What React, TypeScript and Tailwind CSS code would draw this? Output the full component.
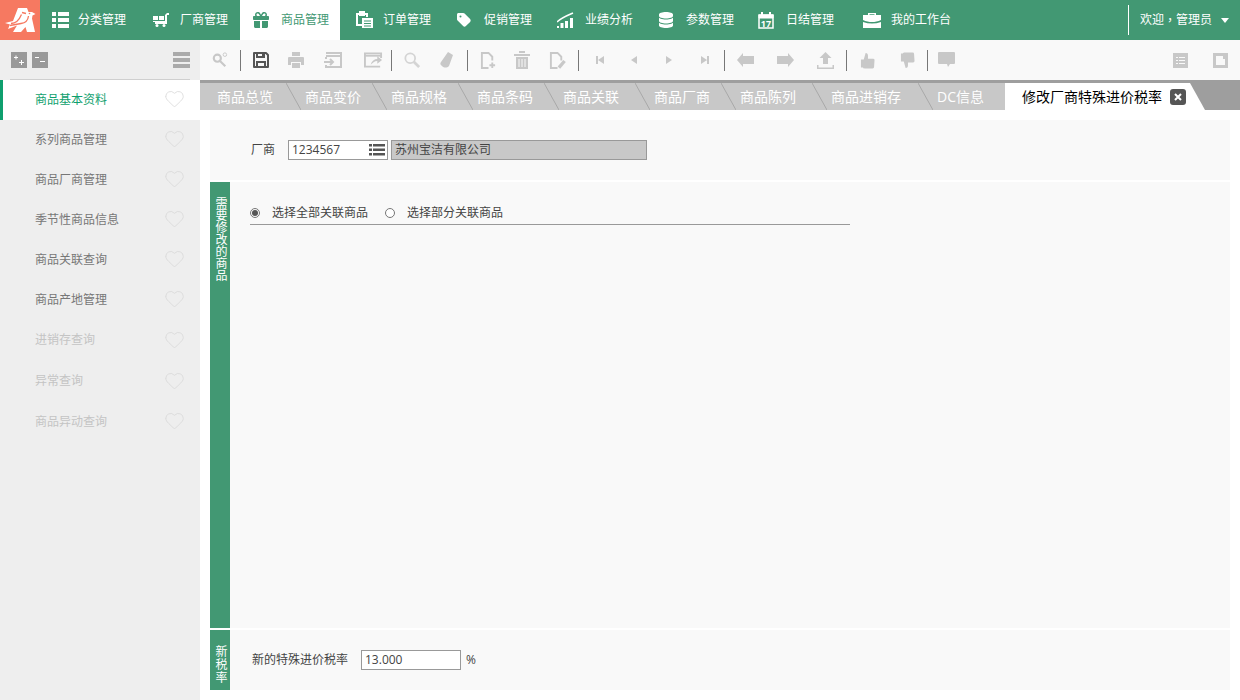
import type { ReactNode } from "react"
import { Heart } from "lucide-react"
import { FaGift, FaTag, FaDatabase } from "react-icons/fa6"

const font = "font-['Open_Sans','Noto_Sans_CJK_SC',sans-serif]"

function Logo() {
  return (
    <svg viewBox="0 0 40 40" className="w-10 h-10 shrink-0">
      <rect width="40" height="40" fill="#f67961" />
      <path fill="#fff" d="M18 8h9l1.500 4 3.500 0 3.500 2-3 1.500-.5 3L35 32h-8l-1.500-5-4.500 5h-8l4-6.500L8 29l2-4.500-5-1.500 8-2z" />
      <path fill="none" stroke="#f67961" strokeWidth="1.300" d="M11 23.500c5 0 8-3 10.500-9M10 25.500l11-2c4-.5 7-3 7.500-7.500M22 12.500l4 1" />
      <circle cx="29.500" cy="13.500" r=".8" fill="#f67961" />
    </svg>
  )
}

function MenuIcon({ name, active }: { name: string; active?: boolean }) {
  const color = active ? "#429873" : "#fff"
  switch (name) {
    case "list":
      return (
        <svg viewBox="0 0 17 16" className="w-[17px] h-4" fill={color}>
          <path d="M0 0h4v4H0zM6 0h11v4H6zM0 6h4v4H0zM6 6h11v4H6zM0 12h4v4H0zM6 12h11v4H6z" />
        </svg>
      )
    case "cart":
      return (
        <svg viewBox="0 0 16 14" className="w-4 h-[14px]" fill={color}>
          <path d="M0 3h5v4H0zM6 3h5v4H6zM0 8h12V2l2-2h2v2h-2v9H2V9H0z" />
          <circle cx="4" cy="12.500" r="1.500" />
          <circle cx="11" cy="12.500" r="1.500" />
        </svg>
      )
    case "gift":
      return <FaGift color={color} size={16} />
    case "order":
      return (
        <svg viewBox="0 0 18 18" className="w-[18px] h-[18px]" fill="none" stroke={color} strokeWidth="2">
          <path d="M6 14H1V3h10v3" />
          <path d="M4 1h4v3H4z" fill={color} />
          <path d="M6 7h11v10H6z" fill={color} stroke="none" />
          <path d="M8 10h7M8 12.500h7M8 15h7" stroke="#429873" strokeWidth="1" />
        </svg>
      )
    case "tag":
      return <FaTag color={color} size={16} />
    case "chart":
      return (
        <svg viewBox="0 0 17 16" className="w-[17px] h-4" fill={color}>
          <path d="M0 14h2v2H0zM3.500 11h3v5h-3zM8 9h3v7H8zM13 6h3v10h-3z" />
          <path d="M0 10C4 6 9 4 16 1" fill="none" stroke={color} strokeWidth="1.500" />
        </svg>
      )
    case "db":
      return <FaDatabase color={color} size={16} />
    case "cal":
      return (
        <svg viewBox="0 0 16 17" className="w-4 h-[17px]" fill="none" stroke={color}>
          <path d="M1 3h14v13H1z" strokeWidth="1.500" />
          <path d="M1 3h14v3H1z" fill={color} />
          <path d="M4 0v3M12 0v3" strokeWidth="2" />
          <text x="8" y="14.500" textAnchor="middle" fontSize="9" fontWeight="700" fill={color} stroke="none">17</text>
        </svg>
      )
    default:
      return (
        <svg viewBox="0 0 18 16" className="w-[18px] h-4" fill={color}>
          <path d="M5 3V1h8v2h-1.500V2.300h-5V3z" />
          <path d="M0 3h18v5c-3 1.500-6 2-9 2s-6-.5-9-2z" />
          <path d="M0 10c3 1 6 1.500 9 1.500s6-.5 9-1.500v6H0z" />
        </svg>
      )
  }
}

const menus = [
  { icon: "list", label: "分类管理", w: "w-[100px]", pl: "pl-[12px]", box: "w-[26px]" },
  { icon: "cart", label: "厂商管理", w: "w-[100px]", pl: "pl-[13px]", box: "w-[27px]" },
  { icon: "gift", label: "商品管理", w: "w-[100px]", pl: "pl-[13px]", box: "w-[28px]", active: true },
  { icon: "order", label: "订单管理", w: "w-[102px]", pl: "pl-[16px]", box: "w-[27px]" },
  { icon: "tag", label: "促销管理", w: "w-[101px]", pl: "pl-[14px]", box: "w-[28px]" },
  { icon: "chart", label: "业绩分析", w: "w-[101px]", pl: "pl-[14px]", box: "w-[28px]" },
  { icon: "db", label: "参数管理", w: "w-[101px]", pl: "pl-[14px]", box: "w-[28px]" },
  { icon: "cal", label: "日结管理", w: "w-[105px]", pl: "pl-[13px]", box: "w-[28px]" },
  { icon: "bag", label: "我的工作台", w: "w-[120px]", pl: "pl-[13px]", box: "w-[28px]" },
]

const sideItems = [
  { label: "商品基本资料", cls: "h-10 bg-white text-[#0f9f6e] border-l-[3px] border-[#0f9f6e] pl-[32px]", heart: "-mt-[3px]" },
  { label: "系列商品管理", cls: "h-10 pl-[35px] text-[#777]", heart: "-mt-[3px]" },
  { label: "商品厂商管理", cls: "h-10 pl-[35px] text-[#777]", heart: "-mt-[3px]" },
  { label: "季节性商品信息", cls: "h-10 pl-[35px] text-[#777]", heart: "-mt-[3px]" },
  { label: "商品关联查询", cls: "h-10 pl-[35px] text-[#777]", heart: "-mt-[3px]" },
  { label: "商品产地管理", cls: "h-10 pl-[35px] text-[#777]", heart: "-mt-[3px]" },
  { label: "进销存查询", cls: "h-[41px] -mt-px pl-[35px] text-[#c4c4c4]", heart: "" },
  { label: "异常查询", cls: "h-[41px] pl-[35px] text-[#c4c4c4]", heart: "" },
  { label: "商品异动查询", cls: "h-[41px] pl-[35px] text-[#c4c4c4]", heart: "-mt-[2px]" },
]

const tabs = [
  { label: "商品总览", w: "w-[101px]", pl: "pl-[17px]" },
  { label: "商品变价", w: "w-[86px]", pl: "pl-[4px]" },
  { label: "商品规格", w: "w-[86px]", pl: "pl-[4px]" },
  { label: "商品条码", w: "w-[86px]", pl: "pl-[4px]" },
  { label: "商品关联", w: "w-[91px]", pl: "pl-[4px]" },
  { label: "商品厂商", w: "w-[86px]", pl: "pl-[4px]" },
  { label: "商品陈列", w: "w-[91px]", pl: "pl-[4px]" },
  { label: "商品进销存", w: "w-[106px]", pl: "pl-[4px]" },
]

function Btn({ children, w = "w-10", pl = "" }: { children: ReactNode; w?: string; pl?: string }) {
  return <div className={`${w} ${pl} h-10 flex items-center justify-center shrink-0`}>{children}</div>
}

function Sep() {
  return <div className="w-px h-[21px] bg-[#777] shrink-0" />
}

function DocIcon({ mark }: { mark: ReactNode }) {
  return (
    <svg viewBox="0 0 18 18" className="w-[17px] h-[17px]" fill="none" stroke="#c8c8c8" strokeWidth="2">
      <path d="M9 17H2V1h7l4 4v4" />
      {mark}
    </svg>
  )
}

function Thumb({ down }: { down?: boolean }) {
  return (
    <svg viewBox="0 0 16 18" className={`w-[15px] h-[17px] ${down ? "-scale-y-100" : ""}`} fill="#c8c8c8">
      <path d="M6 1c2 0 2.500 1.500 2.500 3v3H14a1.500 1.500 0 011.500 1.500L15 16a1.500 1.500 0 01-1.500 1.500H5c-1 0-1.500-.5-2-1H1V8h3z" />
    </svg>
  )
}

function Toolbar() {
  return (
    <div className="h-10 bg-[#f9f9f9] flex items-center">
      <Btn>
        <svg viewBox="0 0 18 18" className="w-4 h-4" fill="none" stroke="#c8c8c8" strokeWidth="2.400">
          <circle cx="6" cy="7" r="4" />
          <path d="M9 10l6 6" />
          <circle cx="14.500" cy="3" r="2" strokeWidth="1" />
        </svg>
      </Btn>
      <Sep />
      <Btn>
        <svg viewBox="0 0 16 16" className="w-4 h-4" fill="none" stroke="#555" strokeWidth="2">
          <path d="M1 1h12l2 2v12H1z" strokeLinejoin="round" />
          <path d="M4 10h8v5H4zM4 1h7v4H4z" fill="#f9f9f9" />
          <path d="M9 2h1.500v2H9z" fill="#555" stroke="none" />
        </svg>
      </Btn>
      <Btn w="w-[30px]">
        <svg viewBox="0 0 16 16" className="w-4 h-4" fill="#c8c8c8">
          <path d="M4 0h8v4H4zM1 5h14a1 1 0 011 1v7h-3v-3H3v3H0V6a1 1 0 011-1zM4 11h8v5H4z" />
        </svg>
      </Btn>
      <Btn w="w-[44px]">
        <svg viewBox="0 0 18 16" className="w-[18px] h-4" fill="none" stroke="#c8c8c8" strokeWidth="2">
          <path d="M2 1h15v14H2v-2M2 4h15M2 5v2" />
          <path d="M0 10h9M6 7l3 3-3 3" />
        </svg>
      </Btn>
      <Btn w="w-[36px]">
        <svg viewBox="0 0 20 16" className="w-[19px] h-4" fill="none" stroke="#c8c8c8" strokeWidth="2">
          <path d="M18 6V1H1v14h16" />
          <path d="M1 3.500h17" />
          <path d="M7 13c1-4 4-6 7-6V4l5 4-5 4V9c-3 0-5 2-7 4z" fill="#c8c8c8" stroke="none" />
        </svg>
      </Btn>
      <Sep />
      <Btn>
        <svg viewBox="0 0 18 18" className="w-4 h-4" fill="none" stroke="#d4d4d4" strokeWidth="2">
          <circle cx="7" cy="7" r="5.500" />
          <path d="M11 11l6 6" strokeWidth="3" />
        </svg>
      </Btn>
      <Btn w="w-[35px]" pl="pr-[5px]">
        <svg viewBox="0 0 14 18" className="w-3.5 h-[18px]" fill="#c8c8c8">
          <path d="M8 1l5 3-4 11c-2 2-5 2-7 0-2-1-2-3-1-4z" />
        </svg>
      </Btn>
      <Sep />
      <Btn>
        <DocIcon mark={<path d="M13 11v6M10 14h6" />} />
      </Btn>
      <Btn w="w-[28px]">
        <svg viewBox="0 0 16 18" className="w-4 h-[18px]" fill="#c8c8c8">
          <path d="M0 3h16v2H0zM5 0h6v2H5zM2 6h12v12H2z" />
          <path d="M5 8v8M8 8v8M11 8v8" stroke="#f9f9f9" />
        </svg>
      </Btn>
      <Btn w="w-[42px]">
        <DocIcon mark={<path d="M10.500 16.500l6-7" strokeWidth="3.500" />} />
      </Btn>
      <Sep />
      <Btn w="w-[38px]" pl="pl-[4px]">
        <svg viewBox="0 0 12 12" className="w-3 h-3" fill="#c8c8c8">
          <path d="M2 2h2v8H2zM10 2v8L4 6z" />
        </svg>
      </Btn>
      <Btn w="w-[34px]">
        <svg viewBox="0 0 12 12" className="w-3 h-3" fill="#c8c8c8">
          <path d="M9 2v8L3 6z" />
        </svg>
      </Btn>
      <Btn w="w-[35px]">
        <svg viewBox="0 0 12 12" className="w-3 h-3" fill="#c8c8c8">
          <path d="M3 2v8l6-4z" />
        </svg>
      </Btn>
      <Btn w="w-[38px]">
        <svg viewBox="0 0 12 12" className="w-3 h-3" fill="#c8c8c8">
          <path d="M8 2h2v8H8zM2 2v8l6-4z" />
        </svg>
      </Btn>
      <Sep />
      <Btn>
        <svg viewBox="0 0 17 14" className="w-[17px] h-3.5" fill="#c8c8c8">
          <path d="M0 7l6-7v3h11v8H6v3z" />
        </svg>
      </Btn>
      <Btn>
        <svg viewBox="0 0 17 14" className="w-[17px] h-3.5" fill="#c8c8c8">
          <path d="M17 7l-6-7v3H0v8h11v3z" />
        </svg>
      </Btn>
      <Btn w="w-[41px]">
        <svg viewBox="0 0 17 17" className="w-[17px] h-[17px]" fill="#c8c8c8">
          <path d="M8.500 0l6 6H11v6H6V6H2.500zM0 13h1.500v2.500h14V13H17v4H0z" />
        </svg>
      </Btn>
      <Sep />
      <Btn>
        <Thumb />
      </Btn>
      <Btn>
        <Thumb down />
      </Btn>
      <Sep />
      <Btn w="w-[36px]">
        <svg viewBox="0 0 17 16" className="w-[17px] h-4" fill="#c8c8c8">
          <path d="M1 0h15a1 1 0 011 1v10a1 1 0 01-1 1h-4l-2 3-1-3H1a1 1 0 01-1-1V1a1 1 0 011-1z" />
        </svg>
      </Btn>
      <div className="flex-1" />
      <Btn>
        <svg viewBox="0 0 15 15" className="w-[15px] h-[15px]" fill="#c8c8c8">
          <path d="M0 0h15v15H0z" />
          <path d="M3 4h2v1H3zM6 4h6v1H6zM3 7h2v1H3zM6 7h6v1H6zM3 10h2v1H3zM6 10h6v1H6z" fill="#f9f9f9" />
        </svg>
      </Btn>
      <Btn>
        <svg viewBox="0 0 15 15" className="w-[15px] h-[15px]" fill="#c8c8c8">
          <path d="M0 0h15v15H0z" />
          <path d="M3 3h7v3h2v6H3z" fill="#f9f9f9" />
        </svg>
      </Btn>
    </div>
  )
}

function Tabs() {
  return (
    <div className="h-[30px] bg-[#9e9e9e] flex pt-[3px] overflow-hidden">
      {tabs.map((t) => (
        <div key={t.label} className={`${t.w} ${t.pl} relative shrink-0 bg-[#c8c8c8] text-white text-sm leading-[27px] whitespace-nowrap`}>
          {t.label}
          <svg viewBox="0 0 15 27" className="absolute right-0 top-0 w-[15px] h-[27px]" fill="none" stroke="#a8a8a8">
            <path d="M0 0l15 27" />
          </svg>
        </div>
      ))}
      <div className="w-[72px] pl-[4px] shrink-0 bg-[#c8c8c8] text-white text-sm leading-[27px] whitespace-nowrap">DC信息</div>
      <div className="relative w-[185px] shrink-0 bg-white flex items-center pl-[17px] text-sm text-black whitespace-nowrap">
        修改厂商特殊进价税率
        <span className="ml-2 w-4 h-4 rounded-[3px] bg-[#555] flex items-center justify-center">
          <svg viewBox="0 0 8 8" className="w-2 h-2" fill="none" stroke="#fff" strokeWidth="2">
            <path d="M1 1l6 6M7 1L1 7" />
          </svg>
        </span>
        <svg viewBox="0 0 15 27" className="absolute -right-[15px] top-0 w-[15px] h-[27px]" fill="#fff">
          <path d="M0 0l15 27H0z" />
        </svg>
      </div>
    </div>
  )
}

function SideLabel({ text, cls }: { text: string; cls: string }) {
  return (
    <div className="w-5 h-full shrink-0 bg-[#429873] flex justify-center">
      <span className={`text-white text-xs leading-5 [writing-mode:vertical-rl] ${cls}`}>{text}</span>
    </div>
  )
}

function TreeBtn({ minus }: { minus?: boolean }) {
  return (
    <div className="w-4 h-4 bg-[#999]">
      <svg viewBox="0 0 16 16" className="w-4 h-4" fill="none" stroke="#fff">
        <path d={minus ? "M3 5.500h4M8 9.500h5" : "M3 5.500h4M5 3.500v4M8 10.500h5M10.500 8v5"} />
      </svg>
    </div>
  )
}

export default function App() {
  return (
    <div className={`w-[1240px] h-[700px] overflow-hidden bg-white ${font} text-[#444]`}>
      <div className="h-10 bg-[#429873] flex text-xs text-white">
        <Logo />
        {menus.map((m) => (
          <div key={m.label} className={`${m.w} ${m.pl} h-10 flex items-center shrink-0 whitespace-nowrap ${m.active ? "bg-white text-[#429873]" : ""}`}>
            <span className={`${m.box} shrink-0 flex items-center`}>
              <MenuIcon name={m.icon} active={m.active} />
            </span>
            {m.label}
          </div>
        ))}
        <div className="ml-auto my-[5px] w-[112px] border-l border-white pl-[11px] flex items-center whitespace-nowrap">
          欢迎<span className="font-['Noto_Sans_CJK_TC']">，</span>管理员
          <span className="ml-[9px] w-0 h-0 border-x-4 border-x-transparent border-t-[5px] border-t-white" />
        </div>
      </div>

      <div className="flex h-[660px]">
        <div className="w-[200px] shrink-0 bg-[#eeeeee]">
          <div className="h-10 mx-[10px] pl-px flex items-center gap-[5px] border-b border-[#cfcfcf]">
            <TreeBtn />
            <TreeBtn minus />
            <div className="ml-auto flex flex-col gap-[2px]">
              <div className="w-[17px] h-1 bg-[#aaa]" />
              <div className="w-[17px] h-1 bg-[#aaa]" />
              <div className="w-[17px] h-1 bg-[#aaa]" />
            </div>
          </div>
          {sideItems.map((s) => (
            <div key={s.label} className={`${s.cls} flex items-center pr-[15px] text-xs`}>
              <span className="flex-1">{s.label}</span>
              <Heart size={21} strokeWidth={0.9} color="#d8d8d8" className={s.heart} />
            </div>
          ))}
        </div>

        <div className="flex-1 min-w-0">
          <Toolbar />
          <Tabs />
          <div className="px-[10px] pt-[10px] flex flex-col gap-[2px] text-xs">
            <div className="h-[60px] bg-[#f9f9f9] flex items-center pl-[41px]">
              <span className="w-[37px] shrink-0">厂商</span>
              <div className="w-[100px] h-5 bg-white border border-[#999] flex items-center pl-[3px] pr-[2px] justify-between">
                <span>1234567</span>
                <svg viewBox="0 0 16 12" className="w-4 h-3" fill="#555">
                  <path d="M0 0h3v2.500H0zM4 0h12v2.500H4zM0 4.500h3V7H0zM4 4.500h12V7H4zM0 9h3v2.500H0zM4 9h12v2.500H4z" />
                </svg>
              </div>
              <div className="ml-[3px] w-[256px] h-5 bg-[#c8c8c8] border border-[#999] flex items-center pl-[3px]">苏州宝洁有限公司</div>
            </div>

            <div className="flex h-[446px]">
              <SideLabel text="需要修改的商品" cls="pt-[15px]" />
              <div className="flex-1 bg-[#f9f9f9] pl-5 pt-[20px]">
                <div className="w-[600px] h-[23px] border-b border-[#999] flex items-center pb-px">
                  <span className="w-[10px] h-[10px] rounded-full border border-[#777] flex items-center justify-center">
                    <span className="w-[6px] h-[6px] rounded-full bg-[#555]" />
                  </span>
                  <span className="ml-3">选择全部关联商品</span>
                  <span className="ml-[17px] w-[10px] h-[10px] rounded-full border border-[#777] bg-white" />
                  <span className="ml-3">选择部分关联商品</span>
                </div>
              </div>
            </div>

            <div className="flex h-[60px]">
              <SideLabel text="新税率" cls="pt-[15px] tracking-[1px]" />
              <div className="flex-1 bg-[#f9f9f9] flex items-center pl-[22px]">
                <span className="w-[109px] shrink-0">新的特殊进价税率</span>
                <div className="w-[100px] h-5 bg-white border border-[#999] flex items-center pl-[3px]">13.000</div>
                <span className="ml-[5px]">%</span>
              </div>
            </div>
          </div>
        </div>
      </div>
    </div>
  )
}
